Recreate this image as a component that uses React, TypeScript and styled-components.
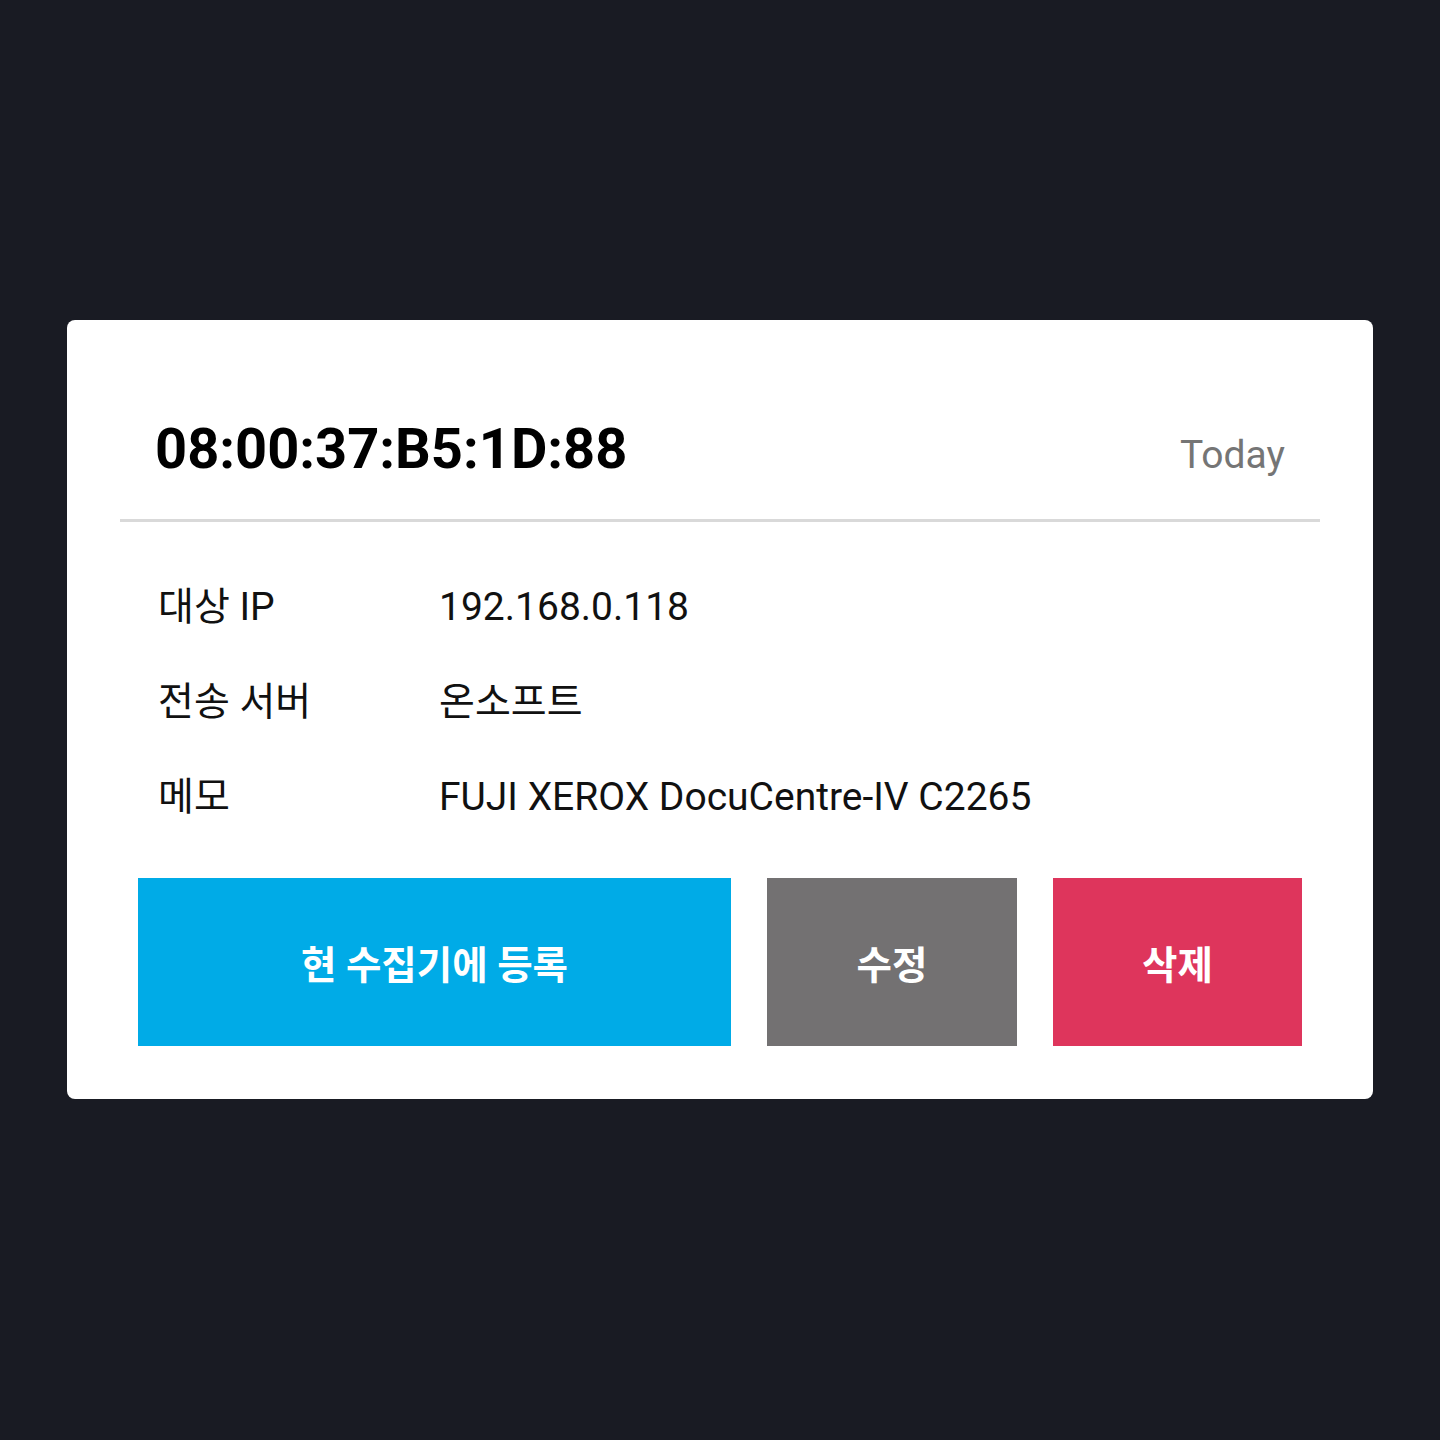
import React from "react";
import styled, { createGlobalStyle } from "styled-components";

const GlobalStyle = createGlobalStyle`
  html, body {
    margin: 0;
    padding: 0;
    background: #191b23;
  }
  body {
    font-family: Roboto, "Noto Sans CJK KR", "Noto Sans", sans-serif;
  }
`;

interface InfoRow {
  label: string;
  value: string;
}

const rows: InfoRow[] = [
  { label: "대상 IP", value: "192.168.0.118" },
  { label: "전송 서버", value: "온소프트" },
  { label: "메모", value: "FUJI XEROX DocuCentre-IV C2265" },
];

const App = () => {
  return (
    <Page>
      <GlobalStyle />
      <Card>
        <Header>
          <MacTitle>08:00:37:B5:1D:88</MacTitle>
          <DateLabel>Today</DateLabel>
        </Header>
        <Divider />
        <InfoList>
          {rows.map((row) => (
            <Row key={row.label}>
              <Label>{row.label}</Label>
              <Value>{row.value}</Value>
            </Row>
          ))}
        </InfoList>
        <ButtonBar>
          <ActionButton color="#00abe7">현 수집기에 등록</ActionButton>
          <ActionButton color="#737172">수정</ActionButton>
          <ActionButton color="#de355c">삭제</ActionButton>
        </ButtonBar>
      </Card>
    </Page>
  );
};
export default App;

const Page = styled.div`
  width: 1440px;
  height: 1440px;
  box-sizing: border-box;
  padding: 320px 67px 0;
`;

const Card = styled.div`
  background: #ffffff;
  border-radius: 8px;
  padding: 95px 53px 53px;
  height: 779px;
  box-sizing: border-box;
`;

const Header = styled.div`
  display: flex;
  justify-content: space-between;
  align-items: baseline;
  padding: 0 35px 36px;
`;

const MacTitle = styled.h1`
  margin: 0;
  font-family: Roboto, sans-serif;
  font-weight: 700;
  font-size: 56px;
  line-height: 68px;
  color: #000000;
`;

const DateLabel = styled.span`
  font-family: Roboto, sans-serif;
  font-size: 39px;
  color: #757575;
`;

const Divider = styled.div`
  height: 3px;
  background: #d9d9d9;
`;

const InfoList = styled.div`
  display: flex;
  flex-direction: column;
  padding: 38px 38px 0;
  margin-bottom: 33px;
`;

const Row = styled.div`
  display: grid;
  grid-template-columns: 281px 1fr;
  height: 95px;
  line-height: 95px;
  font-size: 39px;
  color: #111111;
`;

const Label = styled.span`
  font-family: Roboto, "Noto Sans CJK KR", sans-serif;
`;

const Value = styled.span`
  font-family: Roboto, "Noto Sans CJK KR", sans-serif;
`;

const ButtonBar = styled.div`
  display: grid;
  grid-template-columns: 593px 250px 1fr;
  gap: 36px;
  padding: 0 18px;
`;

const ActionButton = styled.button<{ color: string }>`
  height: 168px;
  border: none;
  border-radius: 0;
  background: ${(props) => props.color};
  color: #ffffff;
  font-family: Roboto, "Noto Sans CJK KR", sans-serif;
  font-weight: 700;
  font-size: 38.5px;
  cursor: pointer;
  padding: 0;
`;
